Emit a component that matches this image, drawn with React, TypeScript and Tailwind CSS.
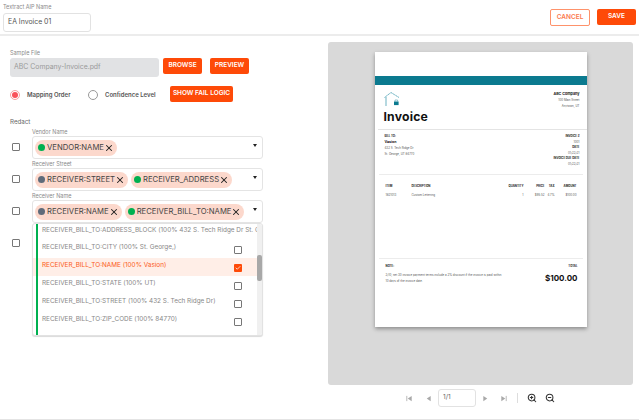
import { X, ZoomIn, ZoomOut, Check } from "lucide-react";

const OrangeButton = ({ label, className }: { label: string; className: string }) => (
  <button className={`h-4 bg-[#fe4a08] text-white text-[6.5px] font-semibold rounded-[2px] flex items-center justify-center ${className}`}>
    {label}
  </button>
);

const Chip = ({ label, dot }: { label: string; dot: string }) => (
  <span className="h-4 rounded-full bg-[#fcd8cc] flex items-center pl-[3px] pr-[3px] text-[7.7px] text-[#444] whitespace-nowrap">
    <span className={`w-[7px] h-[7px] rounded-full mr-[2px] ${dot}`} />
    {label}
    <X className="w-[10px] h-[10px] text-[#222]" strokeWidth={2.5} />
  </span>
);

const Box = () => <span className="w-[8px] h-[8px] block border border-[#777] rounded-[1px] bg-white" />;

const Field = ({ label, chips }: { label: string; chips: { label: string; dot: string }[] }) => (
  <div className="flex h-8">
    <div className="w-[32px] pl-[12px] pt-[15px] shrink-0">
      <Box />
    </div>
    <div className="w-[231px]">
      <div className="h-2 text-[5.5px] leading-[8px] text-[#8a8a8a]">{label}</div>
      <div className="h-[23px] border border-[#e4e4e4] rounded-[3px] bg-white flex items-center gap-[3px] pl-[2px] relative">
        {chips.map((c) => (
          <Chip key={c.label} label={c.label} dot={c.dot} />
        ))}
        <span className="absolute right-[5px] top-[7px] w-0 h-0 border-l-[2px] border-r-[2px] border-t-[3px] border-l-transparent border-r-transparent border-t-[#222]" />
      </div>
    </div>
  </div>
);

const OPTIONS = [
  { text: "RECEIVER_BILL_TO:CITY (100% St. George,)", checked: false },
  { text: "RECEIVER_BILL_TO:NAME (100% Vasion)", checked: true },
  { text: "RECEIVER_BILL_TO:STATE (100% UT)", checked: false },
  { text: "RECEIVER_BILL_TO:STREET (100% 432 S. Tech Ridge Dr)", checked: false },
  { text: "RECEIVER_BILL_TO:ZIP_CODE (100% 84770)", checked: false },
];

const GreenBar = () => <span className="w-[2px] ml-[3px] mr-[4px] h-full bg-[#00b050] shrink-0" />;

const Dropdown = () => (
  <div className="absolute left-[32px] top-[95px] w-[231px] h-[113px] bg-white rounded-[3px] border border-[#e2e2e2] shadow-[0_1px_1px_rgba(0,0,0,0.15)] flex overflow-hidden z-10">
    <div className="flex-1 min-w-0">
      <div className="h-[16px] flex text-[6.4px] leading-[13px] text-[#888] whitespace-nowrap overflow-hidden">
        <GreenBar />
        <span>RECEIVER_BILL_TO:ADDRESS_BLOCK (100% 432 S. Tech Ridge Dr St. George, UT 84770)</span>
      </div>
      {OPTIONS.map((o) => (
        <div key={o.text} className={`h-[18px] flex items-center ${o.checked ? "bg-[#ffeee7]" : ""}`}>
          <GreenBar />
          <span className={`text-[6.4px] flex-1 pb-[2px] ${o.checked ? "text-[#fb5a20]" : "text-[#888]"}`}>{o.text}</span>
          {o.checked ? (
            <span className="w-[8px] h-[8px] mr-[15px] mt-[1px] rounded-[1px] bg-[#fe4a08] flex items-center justify-center">
              <Check className="w-[6px] h-[6px] text-white" strokeWidth={3} />
            </span>
          ) : (
            <span className="mr-[15px] mt-[1px]">
              <Box />
            </span>
          )}
        </div>
      ))}
      <div className="h-[10px] flex">
        <GreenBar />
      </div>
    </div>
    <div className="w-[5px] bg-[#f0f0f0] relative shrink-0">
      <span className="absolute top-[31px] left-0 w-[5px] h-[26px] bg-[#a8a8a8] rounded-[2px]" />
    </div>
  </div>
);

const Tiny = ({ children, className = "" }: { children: React.ReactNode; className?: string }) => (
  <div className={`text-[2.9px] leading-[3px] text-[#555] whitespace-nowrap ${className}`}>{children}</div>
);
const TinyHead = ({ children, className = "" }: { children: React.ReactNode; className?: string }) => (
  <div className={`text-[2.8px] leading-[3px] font-bold text-[#222] whitespace-nowrap ${className}`}>{children}</div>
);

const InvoicePage = () => (
  <div className="w-[212px] h-[275px] mx-auto bg-white shadow-[0_2px_4px_rgba(0,0,0,0.35)] flex flex-col">
    <div className="h-[24px] shrink-0" />
    <div className="h-[9px] bg-[#0b7a8f] shrink-0" />
    <div className="flex justify-between pl-[9px] pr-[7px] pt-[7px] h-[44px] shrink-0">
      <div>
        <svg viewBox="0 0 16 15" className="w-[16px] h-[15px]" fill="none">
          <path d="M0.5 5.5 L7 0.5 L15 5.5" stroke="#2b8fa6" strokeWidth="0.7" strokeDasharray="1.6 0.4" />
          <path d="M2 5 V14" stroke="#2b8fa6" strokeWidth="0.7" />
          <rect x="10" y="9.5" width="4.6" height="3.6" fill="#0b7a8f" />
          <path d="M11 9.5 V8 H13.6 V9.5" stroke="#2b8fa6" strokeWidth="0.5" />
        </svg>
        <div className="text-[12.2px] leading-[14px] font-bold text-[#111] mt-[3px] tracking-[0.2px]">Invoice</div>
      </div>
      <div className="flex flex-col items-end">
        <div className="text-[3.7px] leading-[4px] font-bold text-[#222]">ABC Company</div>
        <Tiny className="mt-[3px]">100 Main Street</Tiny>
        <Tiny className="mt-[3px]">Anytown, UT</Tiny>
      </div>
    </div>
    <div className="h-px bg-[#e4e4e4] ml-[3px] shrink-0" />
    <div className="flex justify-between pl-[10px] pr-[7px] pt-[5px] h-[44px] shrink-0">
      <div>
        <TinyHead>BILL TO:</TinyHead>
        <div className="text-[3.6px] leading-[4px] font-bold text-[#222] mt-[2px]">Vasion</div>
        <Tiny className="mt-[3px]">432 S. Tech Ridge Dr</Tiny>
        <Tiny className="mt-[3px]">St. George, UT 84770</Tiny>
      </div>
      <div className="flex flex-col items-end gap-[2.6px]">
        <TinyHead>INVOICE #</TinyHead>
        <Tiny>1001</Tiny>
        <TinyHead>DATE</TinyHead>
        <Tiny>01/22/21</Tiny>
        <TinyHead>INVOICE DUE DATE</TinyHead>
        <Tiny>01/22/21</Tiny>
      </div>
    </div>
    <div className="h-px bg-[#ececec] mx-[4px] shrink-0" />
    <div className="grid grid-cols-[26px_90px_22px_21px_10px_22px] pl-[11px] pt-[10px] gap-y-[6px] h-[83px] shrink-0 content-start">
      <TinyHead>ITEM</TinyHead>
      <TinyHead>DESCRIPTION</TinyHead>
      <TinyHead className="text-right">QUANTITY</TinyHead>
      <TinyHead className="text-right">PRICE</TinyHead>
      <TinyHead className="text-right">TAX</TinyHead>
      <TinyHead className="text-right">AMOUNT</TinyHead>
      <Tiny>1821013</Tiny>
      <Tiny>Custom Lettering</Tiny>
      <Tiny className="text-right">1</Tiny>
      <Tiny className="text-right">$95.52</Tiny>
      <Tiny className="text-right">4.7%</Tiny>
      <Tiny className="text-right">$100.00</Tiny>
    </div>
    <div className="h-px bg-[#ececec] mx-[4px] shrink-0" />
    <div className="flex justify-between pl-[11px] pr-[9px] pt-[6px]">
      <div>
        <TinyHead>NOTE:</TinyHead>
        <Tiny className="mt-[6px]">2/10, net 30 invoice payment terms include a 2% discount if the invoice is paid within</Tiny>
        <Tiny className="mt-[3px]">10 days of the invoice date.</Tiny>
      </div>
      <div className="flex flex-col items-end">
        <TinyHead>TOTAL</TinyHead>
        <div className="text-[8px] leading-[12px] font-bold text-[#111] mt-[4px]">$100.00</div>
      </div>
    </div>
  </div>
);

const PagerIcon = ({ dir, bar }: { dir: "l" | "r"; bar?: boolean }) => (
  <svg viewBox="0 0 8 8" className="w-[7px] h-[7px]" fill="#a9a9a9">
    {dir === "l" ? <path d="M6.5 1 V7 L2 4 Z" /> : <path d="M1.5 1 V7 L6 4 Z" />}
    {bar && (dir === "l" ? <rect x="0.5" y="1" width="0.9" height="6" /> : <rect x="6.6" y="1" width="0.9" height="6" />)}
  </svg>
);

export default function App() {
  return (
    <div className="w-[639px] h-[420px] bg-white overflow-hidden border-b border-[#e4e4e4] font-['Inter',sans-serif]">
      <div className="h-[36px] border-b-2 border-[#ececec] flex justify-between pt-[4px] pl-[3px] pr-[3px]">
        <div>
          <div className="text-[5.5px] leading-[7px] text-[#8a8a8a]">Textract AIP Name</div>
          <div className="w-[88px] h-[19px] mt-[2px] border border-[#e2e2e2] rounded-[3px] flex items-center pl-[4px] text-[6.9px] text-[#555]">
            EA Invoice 01
          </div>
        </div>
        <div className="flex gap-[7px] pt-[5px] items-start">
          <button className="w-[40px] h-[17px] border border-[#fe4a08]/60 rounded-[2px] text-[6.5px] font-semibold text-[#fb7a50] flex items-center justify-center">
            CANCEL
          </button>
          <OrangeButton label="SAVE" className="w-[39px]" />
        </div>
      </div>

      <div className="flex">
        <div className="w-[328px] shrink-0 relative">
          <div className="pl-[10px] pt-[13px]">
            <div className="text-[5.5px] leading-[8px] text-[#8a8a8a]">Sample File</div>
            <div className="flex mt-[1px]">
              <div className="w-[149px] h-[19px] bg-[#e1e2e4] rounded-[3px] flex items-center pl-[4px] text-[6.9px] text-[#9a9a9a]">
                ABC Company-Invoice.pdf
              </div>
              <OrangeButton label="BROWSE" className="w-[39px] ml-[4px]" />
              <OrangeButton label="PREVIEW" className="w-[39px] ml-[8px]" />
            </div>
          </div>
          <div className="flex pl-[10px] mt-[9px] items-start h-[20px]">
            <span className="w-[10px] h-[10px] mt-[4px] rounded-full border border-[#f8a0a0] flex items-center justify-center">
              <span className="w-[6px] h-[6px] rounded-full bg-[#f9525a]" />
            </span>
            <span className="ml-[7px] mt-[4px] text-[6px] font-semibold text-[#555] w-[50px]">Mapping Order</span>
            <span className="w-[10px] h-[10px] mt-[4px] ml-[11px] rounded-full border border-[#999]" />
            <span className="ml-[7px] mt-[4px] text-[6px] font-semibold text-[#555] w-[53px]">Confidence Level</span>
            <OrangeButton label="SHOW FAIL LOGIC" className="w-[63px] ml-[12px] whitespace-nowrap" />
          </div>
          <div className="pl-[10px] mt-[11px] h-[11px] text-[6.2px] leading-[10px] text-[#666]">Redact</div>
          <div className="relative">
            <Field label="Vendor Name" chips={[{ label: "VENDOR:NAME", dot: "bg-[#00b050]" }]} />
            <Field
              label="Receiver Street"
              chips={[
                { label: "RECEIVER:STREET", dot: "bg-[#5f6b7a]" },
                { label: "RECEIVER_ADDRESS", dot: "bg-[#00b050]" },
              ]}
            />
            <Field
              label="Receiver Name"
              chips={[
                { label: "RECEIVER:NAME", dot: "bg-[#5f6b7a]" },
                { label: "RECEIVER_BILL_TO:NAME", dot: "bg-[#00b050]" },
              ]}
            />
            <Field label="" chips={[]} />
            <Dropdown />
          </div>
        </div>

        <div className="w-[305px] pt-[6px]">
          <div className="h-[343px] bg-[#d9d9d9] rounded-[3px] pt-[10px]">
            <InvoicePage />
          </div>
          <div className="flex items-center justify-center h-[18px] mt-[4px]">
            <PagerIcon dir="l" bar />
            <span className="ml-[12px]"><PagerIcon dir="l" /></span>
            <div className="w-[38px] h-[18px] ml-[6px] border border-[#e2e2e2] rounded-[3px] text-[6.5px] text-[#666] flex items-center pl-[4px]">1/1</div>
            <span className="ml-[6px]"><PagerIcon dir="r" /></span>
            <span className="ml-[11px]"><PagerIcon dir="r" bar /></span>
            <span className="w-px h-[10px] bg-[#ddd] ml-[10px]" />
            <ZoomIn className="w-[10px] h-[10px] ml-[9px] text-[#333]" strokeWidth={2.5} />
            <ZoomOut className="w-[10px] h-[10px] ml-[8px] text-[#333]" strokeWidth={2.5} />
          </div>
        </div>
      </div>
    </div>
  );
}
